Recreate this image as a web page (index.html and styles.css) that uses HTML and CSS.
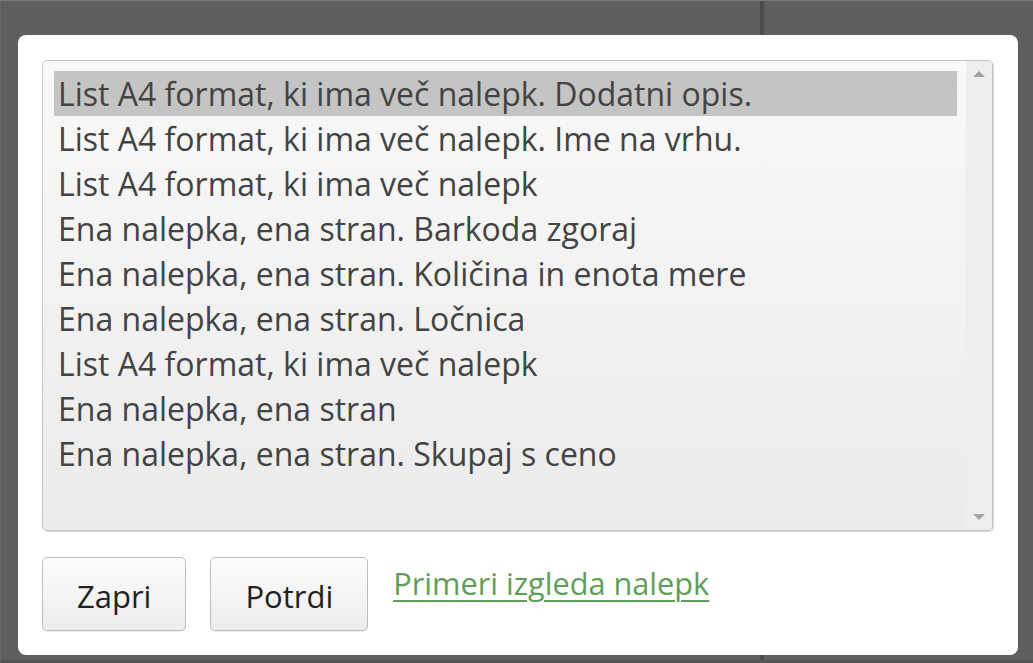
FILE: index.html
```html
<!DOCTYPE html>
<html lang="sl">
<head>
<meta charset="utf-8">
<title>Nalepke</title>
<link rel="stylesheet" href="styles.css">
</head>
<body>
<div class="backdrop">
  <div class="divider"></div>
  <div class="dialog">
    <div class="listbox">
      <div class="options">
        <div class="option selected">List A4 format, ki ima več nalepk. Dodatni opis.</div>
        <div class="option">List A4 format, ki ima več nalepk. Ime na vrhu.</div>
        <div class="option">List A4 format, ki ima več nalepk</div>
        <div class="option">Ena nalepka, ena stran. Barkoda zgoraj</div>
        <div class="option">Ena nalepka, ena stran. Količina in enota mere</div>
        <div class="option">Ena nalepka, ena stran. Ločnica</div>
        <div class="option">List A4 format, ki ima več nalepk</div>
        <div class="option">Ena nalepka, ena stran</div>
        <div class="option">Ena nalepka, ena stran. Skupaj s ceno</div>
      </div>
      <div class="scrollbar">
        <span class="arrow up"></span>
        <span class="arrow down"></span>
      </div>
    </div>
    <div class="actions">
      <button class="btn">Zapri</button>
      <button class="btn">Potrdi</button>
      <a class="link" href="#">Primeri izgleda nalepk</a>
    </div>
  </div>
</div>
</body>
</html>
```
FILE: styles.css
```css
html, body {
  margin: 0;
  padding: 0;
  height: 100%;
}
body {
  font-family: "Open Sans", "Liberation Sans", sans-serif;
  background: #5e5e5e;
}
.backdrop {
  position: relative;
  box-sizing: border-box;
  height: 663px;
  border-top: 1px solid #787878;
  border-left: 1px solid #6a6a6a;
  border-bottom: 3px solid #555;
  padding: 34px 0 0 17px;
}
.divider {
  position: absolute;
  left: 759px;
  top: 0;
  bottom: 0;
  width: 4px;
  background: #4c4c4c;
}
.dialog {
  position: relative;
  box-sizing: border-box;
  width: 1000px;
  height: 620px;
  background: #fff;
  border-radius: 8px;
  padding: 25px 24px 24px 24px;
  display: flex;
  flex-direction: column;
  gap: 26px;
}
.listbox {
  box-sizing: border-box;
  height: 471px;
  width: 951px;
  border: 1px solid #c6c6c6;
  border-radius: 5px;
  box-shadow: 1px 1px 0 #d6d6d6;
  background: linear-gradient(#f9f9f9, #ebebeb);
  display: flex;
}
.options {
  flex: 1;
  padding: 10px 9px 0 11px;
}
.option {
  height: 45px;
  line-height: 45px;
  padding-left: 4px;
  font-size: 32px;
  color: #434343;
  white-space: nowrap;
}
.option.selected {
  background: #c4c4c4;
}
.scrollbar {
  width: 26px;
  background: #eeeeee;
  display: flex;
  flex-direction: column;
  justify-content: space-between;
  align-items: center;
  padding: 10px 0 10px;
  border-radius: 0 4px 4px 0;
}
.arrow {
  width: 0;
  height: 0;
  border-left: 6px solid transparent;
  border-right: 6px solid transparent;
}
.arrow.up {
  border-bottom: 6px solid #a3a3a3;
}
.arrow.down {
  border-top: 6px solid #a3a3a3;
}
.actions {
  display: flex;
  align-items: flex-start;
  gap: 24px;
}
.btn {
  height: 74px;
  padding: 4px 34px 0;
  font-family: inherit;
  font-size: 31px;
  color: #222;
  background: linear-gradient(#fdfdfd, #ececec);
  border: 1px solid #bdbdbd;
  border-radius: 5px;
  box-shadow: 0 1px 1px rgba(0,0,0,0.08);
}
.link {
  margin-left: 1px;
  margin-top: 4px;
  font-size: 30.7px;
  line-height: 44px;
  color: #5f9e58;
  text-decoration: underline;
  text-decoration-thickness: 2px;
  text-underline-offset: 5px;
}
```
